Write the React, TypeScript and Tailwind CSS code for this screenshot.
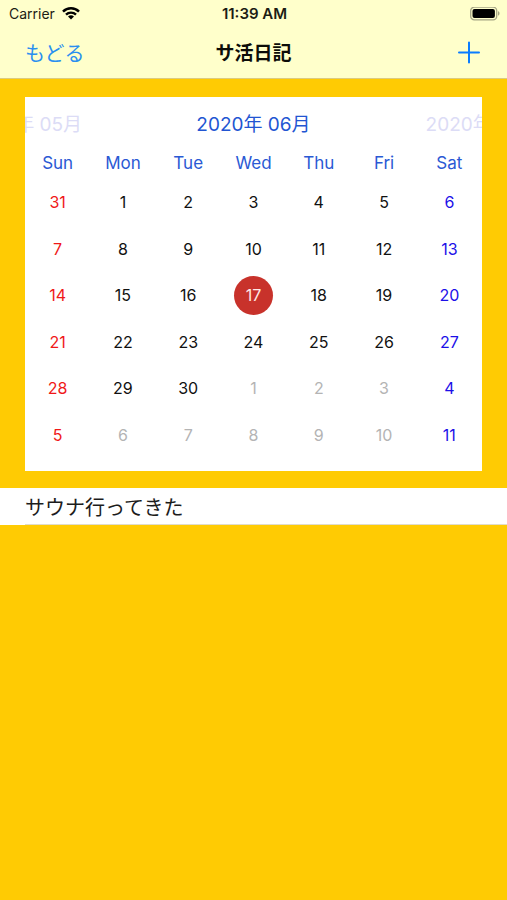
import { useState } from "react";

const weekdays = ["Sun", "Mon", "Tue", "Wed", "Thu", "Fri", "Sat"];

const weeks = [
  [31, 1, 2, 3, 4, 5, 6],
  [7, 8, 9, 10, 11, 12, 13],
  [14, 15, 16, 17, 18, 19, 20],
  [21, 22, 23, 24, 25, 26, 27],
  [28, 29, 30, 1, 2, 3, 4],
  [5, 6, 7, 8, 9, 10, 11],
];

const entries = ["サウナ行ってきた"];

function dayColor(week: number, col: number, day: number) {
  if (col === 0) return "text-[#f01818]";
  if (col === 6) return "text-[#1c10e8]";
  if (week >= 4 && day < 15) return "text-[#b4b4b4]";
  return "text-[#111111]";
}

function StatusBar() {
  return (
    <div className="grid h-7 grid-cols-3 items-center pl-[9px] pr-[7px] text-[14px] leading-5 text-[#1c1c14]">
      <div className="flex items-center gap-[7px]">
        <span>Carrier</span>
        <svg width="18" height="14" viewBox="0 0 18 14" fill="none" aria-hidden="true">
          <path d="M1 4.6a11.4 11.4 0 0 1 16 0" stroke="#000" strokeWidth="2.5" />
          <path d="M4 7.7a7.1 7.1 0 0 1 10 0" stroke="#000" strokeWidth="2.4" />
          <path d="M9 12.6 6 9.6a4.3 4.3 0 0 1 6 0z" fill="#000" />
        </svg>
      </div>
      <div className="text-center text-[15px] font-semibold">11:39 AM</div>
      <svg className="justify-self-end" width="30" height="14" viewBox="0 0 30 14" aria-hidden="true">
        <rect x="0.7" y="0.2" width="26" height="12.6" rx="3.6" fill="none" stroke="#a5a584" strokeWidth="1.3" />
        <rect x="2.5" y="2" width="22.4" height="9" rx="2" fill="#000" />
        <path d="M28 4.3c2 .6 2 3.8 0 4.4z" fill="#a5a584" />
      </svg>
    </div>
  );
}

function NavBar() {
  return (
    <header className="grid h-[50px] grid-cols-3 items-center px-[25px] text-[19px] leading-6">
      <button type="button" className="justify-self-start pt-px text-[20px] text-[#2a8ff0]">もどる</button>
      <h1 className="pt-[2px] text-center font-bold text-[#0c0c08]">サ活日記</h1>
      <button type="button" aria-label="追加" className="justify-self-end">
        <svg width="26" height="24" viewBox="0 0 26 24" fill="none" stroke="#0a7cff" strokeWidth="2" strokeLinecap="round">
          <path d="M13 1.5v20M3 11.5h20" />
        </svg>
      </button>
    </header>
  );
}

function Calendar() {
  const [selected, setSelected] = useState("2-3");

  return (
    <section className="mx-[25px] mt-[18px] bg-white pb-[13px]">
      <div className="flex h-[50px] items-center justify-center overflow-hidden pt-[6px] text-[19px] leading-6 whitespace-nowrap">
        <div className="w-1/2 shrink-0 text-center text-[#dcdcf6]">2020年 05月</div>
        <h2 className="w-1/2 shrink-0 text-center text-[#2255d2]">2020年 06月</h2>
        <div className="w-1/2 shrink-0 text-center text-[#dcdcf6]">2020年 07月</div>
      </div>
      <table className="h-[311px] w-full table-fixed border-collapse text-center">
        <thead>
          <tr className="h-8 text-[17px] leading-5 text-[#2a59d4]">
            {weekdays.map((name) => (
              <th key={name} scope="col" className="p-0 font-normal">{name}</th>
            ))}
          </tr>
        </thead>
        <tbody className="text-[16px] leading-5">
          {weeks.map((days, week) => (
            <tr key={week}>
              {days.map((day, col) => {
                const id = `${week}-${col}`;
                return (
                  <td key={id} className="p-0">
                    <button
                      type="button"
                      onClick={() => setSelected(id)}
                      className={`mx-auto flex size-[39px] items-center justify-center rounded-full ${
                        selected === id ? "bg-[#c8322b] text-[#ffe9e6]" : dayColor(week, col, day)
                      }`}
                    >
                      {day}
                    </button>
                  </td>
                );
              })}
            </tr>
          ))}
        </tbody>
      </table>
    </section>
  );
}

export default function App() {
  return (
    <div className="min-h-screen bg-[#ffcb03] font-['Inter','Noto_Sans_CJK_JP',sans-serif]">
      <div className="border-b border-[#dccb80] bg-[#ffffcb]">
        <StatusBar />
        <NavBar />
      </div>
      <Calendar />
      <ul className="mt-[17px] bg-white pl-[25px]">
        {entries.map((entry) => (
          <li key={entry} className="border-b border-[#e0dccb] pt-2 pb-1 text-[20px] leading-6 text-[#1c1c1c]">
            {entry}
          </li>
        ))}
      </ul>
    </div>
  );
}
